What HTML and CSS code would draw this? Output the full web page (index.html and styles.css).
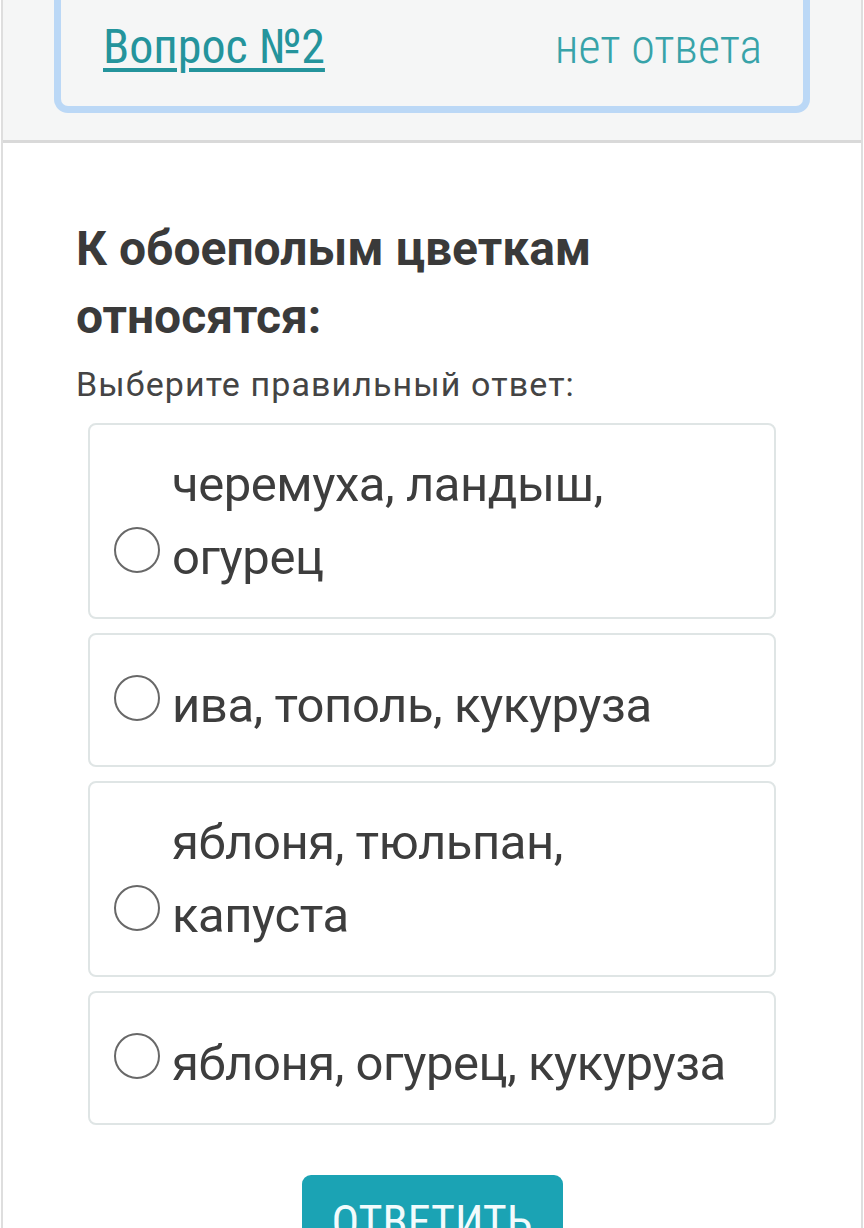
FILE: index.html
```html
<!DOCTYPE html>
<html lang="ru">
<head>
<meta charset="utf-8">
<title>Вопрос №2</title>
<link rel="stylesheet" href="styles.css">
</head>
<body>
<div class="page">
  <div class="top">
    <div class="qcard">
      <a class="qlink" href="#">Вопрос №2</a>
      <span class="qstatus">нет ответа</span>
    </div>
  </div>
  <div class="main">
    <h1 class="question">К обоеполым цветкам относятся:</h1>
    <p class="hint">Выберите правильный ответ:</p>
    <div class="options">
      <label class="option">
        <span class="radio"></span>
        <span class="otext">черемуха, ландыш, огурец</span>
      </label>
      <label class="option">
        <span class="radio"></span>
        <span class="otext">ива, тополь, кукуруза</span>
      </label>
      <label class="option">
        <span class="radio"></span>
        <span class="otext">яблоня, тюльпан, капуста</span>
      </label>
      <label class="option">
        <span class="radio"></span>
        <span class="otext">яблоня, огурец, кукуруза</span>
      </label>
    </div>
    <div class="actions">
      <button class="submit" type="button">ОТВЕТИТЬ</button>
    </div>
  </div>
</div>
</body>
</html>
```
FILE: styles.css
```css
html, body {
  margin: 0;
  padding: 0;
  background: #ffffff;
}
body {
  font-family: Roboto, "Noto Sans", sans-serif;
  color: #3d3d3d;
}
.page {
  margin-left: 1px;
  width: 858px;
  border-left: 2px solid #dedede;
  border-right: 2px solid #dedede;
  min-height: 1228px;
}
.top {
  background: #f5f6f6;
  padding: 0 51px 27px 51px;
  border-bottom: 3px solid #d9d9d9;
}
.qcard {
  display: flex;
  justify-content: space-between;
  align-items: baseline;
  border: 7px solid #bbd8f6;
  border-top: 0;
  border-radius: 0 0 14px 14px;
  padding: 19px 41px 31px 42px;
  font-size: 48px;
  line-height: 56px;
  font-stretch: 87%;
}
.qlink {
  color: #24949c;
  text-decoration: underline;
  text-decoration-thickness: 4px;
  text-underline-offset: 5px;
}
.qstatus {
  color: #38a3a9;
  font-weight: 300;
}
.main {
  padding: 72px 0 0 73px;
}
.question {
  margin: 0;
  font-size: 48px;
  line-height: 68px;
  font-weight: 700;
  color: #3a3a3a;
  width: 620px;
}
.hint {
  margin: 13px 0 0 0;
  font-size: 34px;
  line-height: 40px;
  letter-spacing: 1.1px;
  color: #444444;
}
.options {
  margin: 19px 0 0 12px;
  width: 688px;
  display: flex;
  flex-direction: column;
  gap: 14px;
}
.option {
  display: flex;
  align-items: flex-end;
  min-height: 134px;
  box-sizing: border-box;
  border: 2px solid #dfe5e5;
  border-radius: 8px;
  padding: 23px 20px 23px 24px;
  cursor: pointer;
}
.radio {
  flex: none;
  width: 42px;
  height: 42px;
  border: 2.5px solid #686868;
  border-radius: 50%;
  margin-bottom: 21px;
  margin-right: 12px;
}
.otext {
  font-size: 49px;
  line-height: 73px;
  letter-spacing: -0.45px;
  color: #3d3d3d;
  max-width: 470px;
}
.option:nth-child(2) .otext,
.option:nth-child(4) .otext {
  max-width: 600px;
}
.actions {
  display: flex;
  justify-content: center;
  margin: 50px 0 0 -73px;
}
.submit {
  font-family: Roboto, "Noto Sans", sans-serif;
  font-stretch: 87%;
  width: 261px;
  border: 0;
  border-radius: 9px;
  background: #1ba3b4;
  color: #f2fbfc;
  font-size: 46px;
  line-height: 56px;
  padding: 19px 0 19px 0;
}
```
